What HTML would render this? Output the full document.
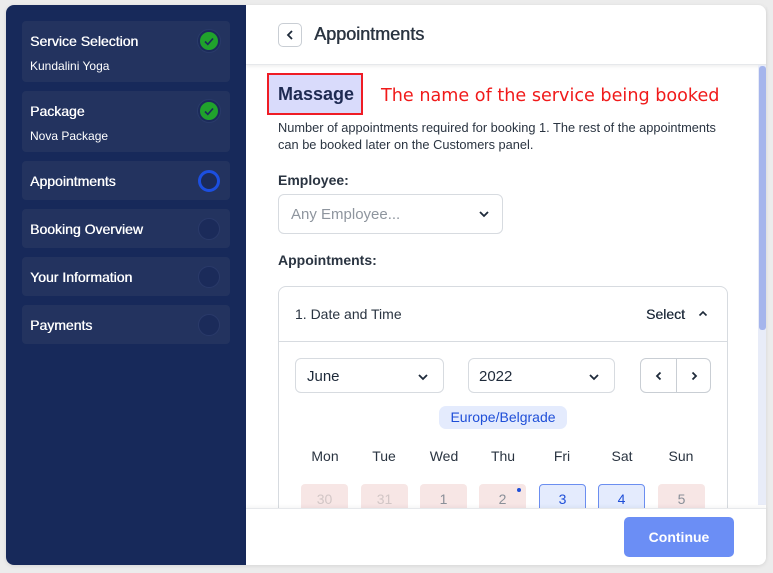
<!DOCTYPE html>
<html><head><style>
*{box-sizing:border-box;margin:0;padding:0}
body{width:773px;height:573px;background:#ececec;font-family:"Liberation Sans",sans-serif;position:relative;overflow:hidden}
.a{position:absolute}
.card{left:6px;top:5px;width:760px;height:560px;background:#fff;border-radius:8px;overflow:hidden;box-shadow:0 1px 4px rgba(0,0,0,.1)}
.side{left:6px;top:5px;width:240px;height:560px;background:#17295a;border-radius:8px 0 0 8px}
.it{position:absolute;left:22px;width:208px;background:#23335f;border-radius:4px;color:#fff}
.it .t{position:absolute;left:8px;font-size:14px;text-shadow:0.4px 0 0 #fff}
.it .s{position:absolute;left:8px;font-size:12px}
.c{position:absolute;left:176px;width:22px;height:22px;border-radius:50%;background:#1b2b5a;border:1px solid #2a3a6a}
.g{background:#20a32c;border:2px solid #1b2b5a;box-shadow:0 0 0 1px #2a3a6a}
.sel{height:35px;border:1px solid #d7dbe0;border-radius:6px;background:#fff;font-size:15px;color:#1e2a3a}
.day{position:absolute;top:484px;width:47px;height:30px;border-radius:4px;background:#f7e6e5;color:#8a8f98;font-size:14px;text-align:center;line-height:30px}
.wd{position:absolute;top:448px;width:60px;text-align:center;font-size:14px;color:#2a3441}
</style></head><body>
<div class="a card"></div>
<div class="a side"></div>
<div class="it" style="top:21px;height:61px"><span class="t" style="top:12px">Service Selection</span><span class="s" style="top:38px">Kundalini Yoga</span><div class="c g" style="top:9px"><svg width="18" height="18" viewBox="0 0 18 18" style="position:absolute;left:0;top:0"><path d="M5 9.5l2.8 2.8L13 6.5" fill="none" stroke="#1b2b5a" stroke-width="1.6"/></svg></div></div>
<div class="it" style="top:91px;height:61px"><span class="t" style="top:12px">Package</span><span class="s" style="top:38px">Nova Package</span><div class="c g" style="top:9px"><svg width="18" height="18" viewBox="0 0 18 18" style="position:absolute;left:0;top:0"><path d="M5 9.5l2.8 2.8L13 6.5" fill="none" stroke="#1b2b5a" stroke-width="1.6"/></svg></div></div>
<div class="it" style="top:161px;height:39px"><span class="t" style="top:12px">Appointments</span><div class="c" style="top:9px;border:3px solid #1c4fe0"></div></div>
<div class="it" style="top:209px;height:39px"><span class="t" style="top:12px">Booking Overview</span><div class="c" style="top:9px"></div></div>
<div class="it" style="top:257px;height:39px"><span class="t" style="top:12px">Your Information</span><div class="c" style="top:9px"></div></div>
<div class="it" style="top:305px;height:39px"><span class="t" style="top:12px">Payments</span><div class="c" style="top:9px"></div></div>

<div class="a" style="left:246px;top:5px;width:520px;height:60px;border-bottom:1px solid #e6e8eb;box-shadow:0 2px 3px rgba(0,0,0,.06)"></div>
<div class="a" style="left:278px;top:23px;width:24px;height:24px;border:1px solid #c9ced4;border-radius:5px"><svg width="22" height="22" viewBox="0 0 22 22"><path d="M13 7l-4 4 4 4" fill="none" stroke="#1e2a3a" stroke-width="1.8"/></svg></div>
<div class="a" style="left:314px;top:24px;font-size:18px;color:#2a3441;text-shadow:0.5px 0 0 #2a3441">Appointments</div>

<div class="a" style="left:758px;top:65px;width:8px;height:440px;background:#e8ecf8"></div>
<div class="a" style="left:759px;top:66px;width:7px;height:264px;background:#a5b5ec;border-radius:3px"></div>

<div class="a" style="left:267px;top:73px;width:96px;height:42px;background:#d9dbfb;border:2px solid #ef1c25"></div>
<div class="a" style="left:278px;top:84px;font-size:18px;font-weight:bold;color:#1e2a52">Massage</div>
<div class="a" style="left:381px;top:86px;font-size:17.6px;color:#f01a1a;font-family:'DejaVu Sans',sans-serif">The name of the service being booked</div>
<div class="a" style="left:278px;top:119px;font-size:12.8px;line-height:17px;color:#2a3441;width:480px;white-space:nowrap">Number of appointments required for booking 1. The rest of the appointments<br>can be booked later on the Customers panel.</div>
<div class="a" style="left:278px;top:172px;font-size:14px;font-weight:bold;color:#2a3441">Employee:</div>
<div class="a sel" style="left:278px;top:194px;width:225px;height:40px;color:#8e959e;padding:11px 12px">Any Employee...<svg class="a" style="right:12px;top:13px" width="12" height="12" viewBox="0 0 12 12"><path d="M2 4l4 4 4-4" fill="none" stroke="#1e2a3a" stroke-width="1.8"/></svg></div>
<div class="a" style="left:278px;top:252px;font-size:14px;font-weight:bold;color:#2a3441">Appointments:</div>

<div class="a" style="left:278px;top:286px;width:450px;height:240px;border:1px solid #d7dbe0;border-radius:8px"></div>
<div class="a" style="left:278px;top:341px;width:450px;border-top:1px solid #d7dbe0"></div>
<div class="a" style="left:295px;top:306px;font-size:14px;color:#2a3441">1. Date and Time</div>
<div class="a" style="left:646px;top:306px;font-size:14px;color:#1e2a3a;text-shadow:0.3px 0 0 #1e2a3a">Select</div>
<svg class="a" style="left:697px;top:308px" width="12" height="12" viewBox="0 0 12 12"><path d="M2.5 7.5l3.5-3.5 3.5 3.5" fill="none" stroke="#1e2a3a" stroke-width="1.6"/></svg>

<div class="a sel" style="left:295px;top:358px;width:149px;padding:9px 11px">June<svg class="a" style="right:14px;top:12px" width="12" height="12" viewBox="0 0 12 12"><path d="M2 4l4 4 4-4" fill="none" stroke="#1e2a3a" stroke-width="1.8"/></svg></div>
<div class="a sel" style="left:468px;top:358px;width:147px;padding:9px 10px">2022<svg class="a" style="right:14px;top:12px" width="12" height="12" viewBox="0 0 12 12"><path d="M2 4l4 4 4-4" fill="none" stroke="#1e2a3a" stroke-width="1.8"/></svg></div>
<div class="a sel" style="left:640px;top:358px;width:71px;border-color:#c9ced4"><div class="a" style="left:35px;top:0;height:33px;border-left:1px solid #c9ced4"></div><svg class="a" style="left:12px;top:11px" width="12" height="12" viewBox="0 0 12 12"><path d="M7.5 2.5L4 6l3.5 3.5" fill="none" stroke="#1e2a3a" stroke-width="1.8"/></svg><svg class="a" style="left:47px;top:11px" width="12" height="12" viewBox="0 0 12 12"><path d="M4.5 2.5L8 6l-3.5 3.5" fill="none" stroke="#1e2a3a" stroke-width="1.8"/></svg></div>
<div class="a" style="left:439px;top:406px;width:128px;height:23px;background:#e4ebfd;border-radius:7px;color:#1f4fd8;font-size:14px;text-align:center;line-height:23px">Europe/Belgrade</div>

<div class="wd" style="left:295px">Mon</div><div class="wd" style="left:354px">Tue</div><div class="wd" style="left:414px">Wed</div><div class="wd" style="left:473px">Thu</div><div class="wd" style="left:532px">Fri</div><div class="wd" style="left:592px">Sat</div><div class="wd" style="left:651px">Sun</div>
<div class="day" style="left:301px;color:#d2c6c6">30</div>
<div class="day" style="left:361px;color:#d2c6c6">31</div>
<div class="day" style="left:420px">1</div>
<div class="day" style="left:479px">2<span class="a" style="right:5px;top:4px;width:4px;height:4px;border-radius:50%;background:#1f4fd8"></span></div>
<div class="day" style="left:539px;background:#e4ebfd;border:1px solid #6b8ef0;color:#1f4fd8;line-height:28px">3</div>
<div class="day" style="left:598px;background:#e4ebfd;border:1px solid #6b8ef0;color:#1f4fd8;line-height:28px">4</div>
<div class="day" style="left:658px">5</div>

<div class="a" style="left:246px;top:508px;width:520px;height:57px;background:#fff;border-top:1px solid #e6e8eb;border-radius:0 0 8px 0;box-shadow:0 -2px 3px rgba(0,0,0,.04)"></div>
<div class="a" style="left:624px;top:517px;width:110px;height:40px;background:#6b8ef5;border-radius:5px;color:#fff;font-size:14px;font-weight:bold;text-align:center;line-height:40px">Continue</div>
</body></html>
